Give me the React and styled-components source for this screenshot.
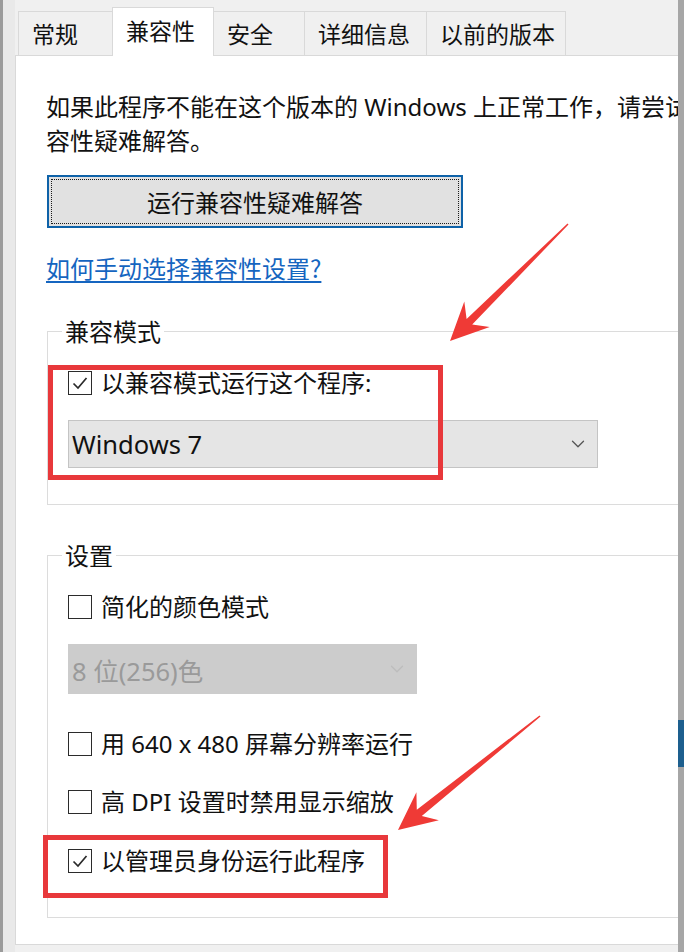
import React from 'react';
import styled, { createGlobalStyle } from 'styled-components';
import { ChevronDown } from 'lucide-react';

const GlobalStyle = createGlobalStyle`
  html, body {
    margin: 0;
    padding: 0;
    background: #f0f0f0;
  }
  body {
    font-family: "Noto Sans", "Noto Sans CJK SC", sans-serif;
    color: #1a1a1a;
  }
`;

const tabs = [
  { label: '常规', width: 94 },
  { label: '兼容性', width: 101, active: true },
  { label: '安全', width: 91 },
  { label: '详细信息', width: 122 },
  { label: '以前的版本', width: 139 },
];

// arrow as a tapered polygon: thin tail, swept-back head
function arrowPoints([tx, ty], [hx, hy], tail = 1.5, shaft = 8, head = 18, headLen = 38) {
  const len = Math.hypot(hx - tx, hy - ty);
  const ux = (hx - tx) / len;
  const uy = (hy - ty) / len;
  const nx = -uy;
  const ny = ux;
  const base = [hx - ux * headLen, hy - uy * headLen];
  const neck = [hx - ux * headLen * 0.72, hy - uy * headLen * 0.72];
  const p = (c, w) => `${(c[0] + nx * w).toFixed(1)},${(c[1] + ny * w).toFixed(1)}`;
  return [
    p([tx, ty], tail / 2),
    p(neck, shaft / 2),
    p(base, head),
    `${hx},${hy}`,
    p(base, -head),
    p(neck, -shaft / 2),
    p([tx, ty], -tail / 2),
  ].join(' ');
}

export default function App() {
  return (
    <>
      <GlobalStyle />
      <Screen>
        <LeftEdge />
        <Dialog>
          <TabStrip>
            {tabs.map(t => (
              <Tab key={t.label} $width={t.width} $active={t.active}>
                {t.label}
              </Tab>
            ))}
          </TabStrip>
          <Panel>
            <Intro>
              如果此程序不能在这个版本的 Windows 上正常工作，请尝试运行兼
              <br />
              容性疑难解答。
            </Intro>
            <TroubleshootButton>运行兼容性疑难解答</TroubleshootButton>
            <HelpLink href="#">如何手动选择兼容性设置?</HelpLink>

            <Group $top={32} $pb={36}>
              <Legend>兼容模式</Legend>
              <Row $top={0}>
                <Checkbox checked />
                以兼容模式运行这个程序:
              </Row>
              <Select $width={530} $top={22}>
                Windows 7
                <ChevronDown size={22} strokeWidth={1.4} color="#555" />
              </Select>
            </Group>

            <Group $top={35} $pb={41}>
              <Legend>设置</Legend>
              <Row $top={0}>
                <Checkbox />
                简化的颜色模式
              </Row>
              <Select $width={349} $top={22} $height={50} $disabled>
                8 位(256)色
                <ChevronDown size={22} strokeWidth={1.4} color="#bdbdbd" />
              </Select>
              <Row $top={35}>
                <Checkbox />
                用 640 x 480 屏幕分辨率运行
              </Row>
              <Row $top={28}>
                <Checkbox />
                高 DPI 设置时禁用显示缩放
              </Row>
              <Row $top={29}>
                <Checkbox checked />
                以管理员身份运行此程序
              </Row>
            </Group>
          </Panel>
        </Dialog>
        <RightEdge>
          <BlueBlock />
        </RightEdge>

        <Annotations viewBox="0 0 684 952">
          <rect x="50.5" y="367.5" width="390" height="110" />
          <rect x="45.5" y="837.5" width="340" height="58" />
          <polygon points={arrowPoints([568, 224], [450, 341])} />
          <polygon points={arrowPoints([540, 716], [398, 830])} />
        </Annotations>
      </Screen>
    </>
  );
}

function Checkbox({ checked }) {
  return (
    <Box>
      {checked && (
        <svg width="20" height="20" viewBox="0 0 20 20">
          <path d="M3.5 10.5 L8 15 L16.5 5" fill="none" stroke="#2a2a2a" strokeWidth="1.7" />
        </svg>
      )}
    </Box>
  );
}

const Screen = styled.div`
  position: relative;
  display: flex;
  width: 684px;
  height: 952px;
  overflow: hidden;
  background: #f0f0f0;
`;

const LeftEdge = styled.div`
  width: 12px;
  border-left: 3px solid #9b9b9b;
  background: #e9e9e9;
`;

const RightEdge = styled.div`
  width: 6px;
  background: #a6a6a6;
  padding-top: 720px;
  box-sizing: border-box;
`;

const BlueBlock = styled.div`
  height: 47px;
  background: #1d5f8e;
`;

const Dialog = styled.div`
  flex: 1;
  display: flex;
  flex-direction: column;
  min-width: 0;
`;

const TabStrip = styled.div`
  display: flex;
  align-items: flex-end;
  height: 55px;
  padding-left: 3px;
`;

const Tab = styled.div`
  position: relative;
  z-index: ${p => (p.$active ? 1 : 0)};
  box-sizing: border-box;
  width: ${p => p.$width + 1}px;
  height: ${p => (p.$active ? 49 : 44)}px;
  margin-right: -1px;
  margin-bottom: ${p => (p.$active ? -1 : 0)}px;
  padding-left: 13px;
  border: 1px solid #d9d9d9;
  border-bottom: none;
  background: ${p => (p.$active ? '#fff' : '#f0f0f0')};
  font-family: "Noto Sans CJK SC", sans-serif;
  font-size: 23px;
  line-height: ${p => (p.$active ? 44 : 42)}px;
  color: #111;
  white-space: nowrap;
`;

const Panel = styled.div`
  height: 890px;
  box-sizing: border-box;
  background: #fff;
  border: 1px solid #d9d9d9;
  border-right: none;
  padding: 34px 0 0 30px;
  overflow: hidden;
`;

const Intro = styled.p`
  margin: 0;
  font-size: 24px;
  line-height: 34px;
  white-space: nowrap;
  color: #111;
`;

const TroubleshootButton = styled.button`
  position: relative;
  display: block;
  width: 416px;
  height: 53px;
  margin: 17px 0 0 1px;
  padding: 0;
  background: #e1e1e1;
  border: 2px solid #0e62a8;
  font-family: "Noto Sans CJK SC", sans-serif;
  font-size: 24px;
  color: #111;

  &::after {
    content: '';
    position: absolute;
    inset: 2px;
    border: 1px dotted #1b1b1b;
  }
`;

const HelpLink = styled.a`
  display: inline-block;
  margin-top: 24px;
  font-family: "Noto Sans CJK SC", sans-serif;
  font-size: 24px;
  line-height: 32px;
  color: #1565c0;
  text-decoration: underline;
  text-underline-offset: 3px;
`;

const Group = styled.fieldset`
  min-width: 0;
  margin: ${p => p.$top}px -40px 0 1px;
  padding: 22px 0 ${p => p.$pb}px 20px;
  border: 1px solid #dcdcdc;
  border-radius: 0;
`;

const Legend = styled.legend`
  margin-left: -6px;
  padding: 0 3px;
  font-family: "Noto Sans CJK SC", sans-serif;
  font-size: 24px;
  line-height: 30px;
  color: #111;
`;

const Row = styled.div`
  display: flex;
  align-items: center;
  gap: 9px;
  height: 30px;
  margin-top: ${p => p.$top}px;
  font-size: 24px;
  line-height: 30px;
  color: #111;
  white-space: nowrap;
`;

const Box = styled.span`
  display: flex;
  align-items: center;
  justify-content: center;
  width: 24px;
  height: 24px;
  box-sizing: border-box;
  border: 1.5px solid #2b2b2b;
  background: #fff;
  flex-shrink: 0;
`;

const Select = styled.div`
  display: flex;
  align-items: center;
  justify-content: space-between;
  box-sizing: border-box;
  width: ${p => p.$width}px;
  height: ${p => p.$height || 48}px;
  margin-top: ${p => p.$top}px;
  padding: 0 8px 0 3px;
  background: ${p => (p.$disabled ? '#cccccc' : '#e5e5e5')};
  border: 1px solid ${p => (p.$disabled ? '#cccccc' : '#c4c4c4')};
  font-size: 25.5px;
  color: ${p => (p.$disabled ? '#9a9a9a' : '#111')};
`;

const Annotations = styled.svg`
  position: absolute;
  inset: 0;
  width: 684px;
  height: 952px;
  pointer-events: none;

  rect {
    fill: none;
    stroke: #e8383b;
    stroke-width: 5;
  }

  polygon {
    fill: #ef3a36;
  }
`;
